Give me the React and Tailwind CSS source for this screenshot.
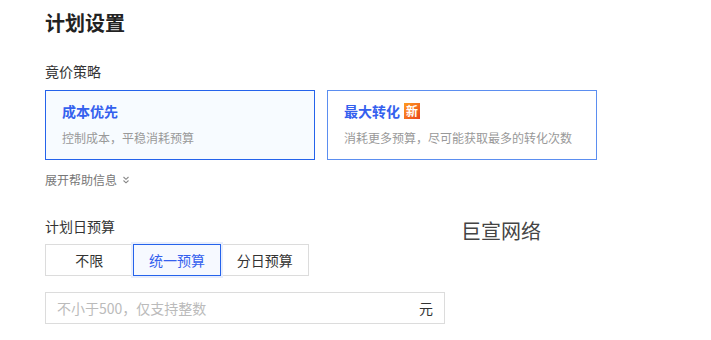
import React, { useState } from 'react';

const FONT = { fontFamily: '"Microsoft YaHei", "Noto Sans CJK SC", "Noto Sans", sans-serif' };

const STRATEGIES = [
  { key: 'cost', title: '成本优先', desc: '控制成本，平稳消耗预算' },
  { key: 'max', title: '最大转化', desc: '消耗更多预算，尽可能获取最多的转化次数', isNew: true },
];

const BUDGETS = ['不限', '统一预算', '分日预算'];

const App = () => {
  const [strategy, setStrategy] = useState('cost');
  const [budget, setBudget] = useState('统一预算');

  return (
    <div style={FONT} className="w-[711px] h-[340px] bg-white overflow-hidden pl-[45px] pt-[9px] text-[#333]">
      {/* Title */}
      <h1 className="text-[20px] leading-[28px] font-bold text-[#222]">计划设置</h1>

      {/* Strategy */}
      <p className="mt-[24px] text-[14px] leading-[20px] text-[#333]">竟价策略</p>
      <div className="mt-[9px] flex gap-[12px]">
        {STRATEGIES.map(s => {
          const on = strategy === s.key;
          return (
            <div key={s.key} onClick={() => setStrategy(s.key)}
              className={`w-[270px] h-[70px] border px-[16px] pt-[10px] cursor-pointer ${on ? 'border-[#2563eb] bg-[#f7fbff]' : 'border-[#5b8ef0] bg-white'}`}>
              <div className="flex items-center gap-[4px]">
                <span className="text-[14px] leading-[20px] font-bold text-[#3460ee]">{s.title}</span>
                {s.isNew && (
                  <span className="w-[16px] h-[16px] flex items-center justify-center text-[12px] leading-none font-bold text-white bg-gradient-to-br from-[#ff9a1e] to-[#e9401c]">新</span>
                )}
              </div>
              <p className="mt-[8px] text-[12px] leading-[18px] text-[#999] whitespace-nowrap">{s.desc}</p>
            </div>
          );
        })}
      </div>

      {/* Help toggle */}
      <div className="mt-[11px] flex items-center gap-[5px] text-[12px] leading-[18px] text-[#777]">
        <span>展开帮助信息</span>
        <svg width="8" height="8" viewBox="0 0 8 8" fill="none" stroke="#888" strokeWidth="1.1">
          <path d="M1.5 1 L4 3.3 L6.5 1" />
          <path d="M1.5 4.5 L4 6.8 L6.5 4.5" />
        </svg>
      </div>

      {/* Daily budget */}
      <div className="flex">
        <div className="w-[400px]">
          <p className="mt-[27px] text-[14px] leading-[20px] text-[#333]">计划日预算</p>
          <div className="mt-[8px] flex w-[264px] h-[32px]">
            {BUDGETS.map((b, i) => {
              const on = budget === b;
              return (
                <button key={b} onClick={() => setBudget(b)}
                  className={`flex-1 h-full text-[14px] border ${i > 0 ? '-ml-px' : ''} ${on ? 'relative z-10 border-[#2563eb] bg-[#f6f9ff] text-[#3460ee] shadow-[0_0_0_2px_#e8eefc]' : 'border-[#dcdcdc] bg-white text-[#333]'}`}>
                  {b}
                </button>
              );
            })}
          </div>
          <div className="mt-[16px] w-[400px] h-[32px] border border-[#dcdcdc] flex items-center pl-[11px] pr-[11px]">
            <input placeholder="不小于500，仅支持整数"
              className="flex-1 outline-none text-[14px] placeholder:text-[#bbb] bg-transparent" style={FONT} />
            <span className="text-[14px] text-[#333]">元</span>
          </div>
        </div>
        <div className="ml-[16px] mt-[28px] text-[20px] leading-[28px] text-[#444]">巨宣网络</div>
      </div>
    </div>
  );
};

export default App;
